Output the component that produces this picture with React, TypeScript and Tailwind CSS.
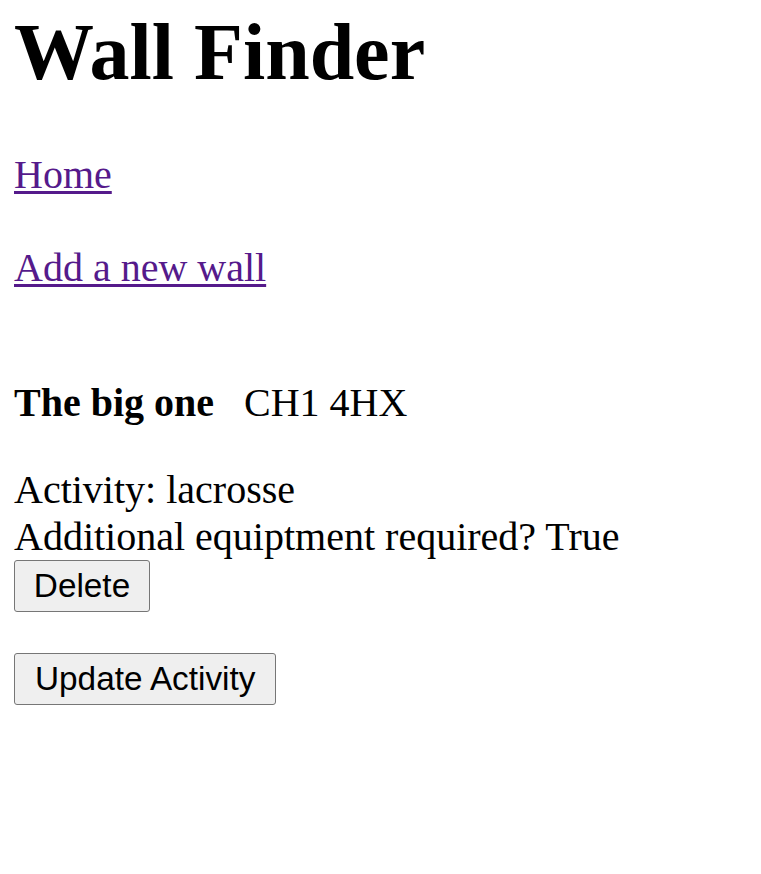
export default function App() {
  const serif = { fontFamily: '"Liberation Serif", "Times New Roman", serif' }

  return (
    <div className="min-h-screen bg-white px-[14px] pt-[6px] text-black" style={serif}>
      {/* Header */}
      <h1 className="text-[80px] font-bold leading-[92px]">Wall Finder</h1>

      {/* Links */}
      <p className="mt-[54px] text-[40px] leading-[46px]">
        <a href="#" className="text-[#551a8b] underline decoration-[3px] underline-offset-[3px]">Home</a>
      </p>
      <p className="mt-[47px] text-[40px] leading-[46px]">
        <a href="#" className="text-[#551a8b] underline decoration-[3px] underline-offset-[3px]">Add a new wall</a>
      </p>

      {/* Wall */}
      <div className="mt-[89px] text-[40px] leading-[46px]">
        <p>
          <b>The big one</b>
          {"\u00a0\u00a0\u00a0"}CH1 4HX
        </p>
        <p className="mt-[41px]">Activity: lacrosse</p>
        <p className="leading-[47px]">Additional equiptment required? True</p>
      </div>

      <div className="flex flex-col items-start gap-[41px]">
        <button className="h-[52px] w-[136px] rounded-[3px] border border-[#767676] bg-[#efefef] font-['Liberation_Sans',Arial,sans-serif] text-[33.33px] leading-none">
          Delete
        </button>
        <button className="h-[52px] rounded-[3px] border border-[#767676] bg-[#efefef] px-[20px] font-['Liberation_Sans',Arial,sans-serif] text-[33.33px] leading-none">
          Update Activity
        </button>
      </div>
    </div>
  )
}
